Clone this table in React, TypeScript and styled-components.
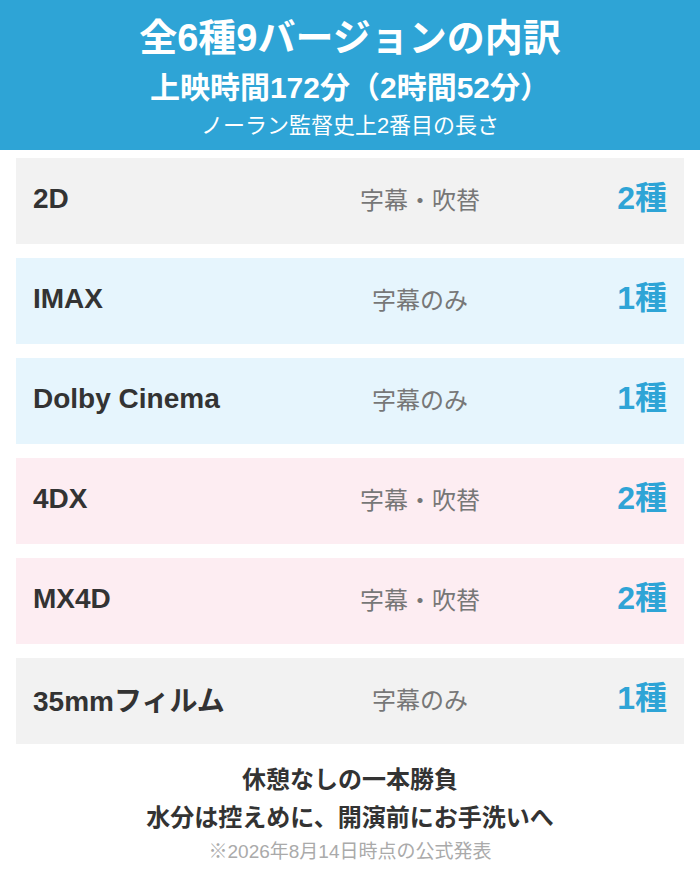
import React from "react";
import styled, { createGlobalStyle } from "styled-components";

const Global = createGlobalStyle`
  html, body { margin: 0; padding: 0; background: #ffffff; }
  body { font-family: "Liberation Sans", Arial, "Noto Sans CJK JP", sans-serif; }
`;

const Page = styled.div`
  width: 700px;
  display: flex;
  flex-direction: column;
`;

const Header = styled.header`
  background: #2ea4d6;
  color: #ffffff;
  height: 150px;
  box-sizing: border-box;
  padding-top: 13px;
  display: flex;
  flex-direction: column;
  align-items: center;
`;

const Title = styled.h1`
  margin: 0;
  font-size: 38px;
  font-weight: 700;
  line-height: 50px;
`;

const Sub = styled.div`
  font-size: 30px;
  font-weight: 700;
  line-height: 36px;
  margin-top: 7px;
`;

const Note = styled.div`
  font-size: 22px;
  font-weight: 400;
  line-height: 28px;
  margin-top: 6px;
`;

const List = styled.div`
  display: flex;
  flex-direction: column;
  gap: 14px;
  padding: 8px 16px 0;
`;

type Tone = "gray" | "blue" | "pink";
const tones: Record<Tone, string> = {
  gray: "#f2f2f2",
  blue: "#e6f5fd",
  pink: "#fdedf2",
};

const Row = styled.div<{ $tone: Tone }>`
  height: 86px;
  background: ${(p) => tones[p.$tone]};
  display: grid;
  grid-template-columns: 287px 200px 1fr;
  align-items: center;
  padding: 0 17px;
  box-sizing: border-box;
`;

const Label = styled.div`
  font-size: 28px;
  font-weight: 700;
  color: #333333;
  margin-bottom: 4px;
`;

const Lang = styled.div`
  font-size: 24px;
  font-weight: 400;
  color: #777777;
  text-align: center;
  margin-bottom: 6px;
`;

const Count = styled.div`
  font-size: 32px;
  font-weight: 700;
  color: #2ea4d6;
  text-align: right;
  margin-bottom: 12px;
`;

const Footer = styled.footer`
  display: flex;
  flex-direction: column;
  align-items: center;
  padding-top: 17px;
  color: #333333;
`;

const Strong = styled.div`
  font-size: 24px;
  font-weight: 700;
  line-height: 38px;
`;

const Small = styled.div`
  font-size: 19px;
  font-weight: 400;
  color: #aaaaaa;
  line-height: 28px;
  margin-top: 1px;
`;

const rows: { label: string; lang: string; count: string; tone: Tone }[] = [
  { label: "2D", lang: "字幕・吹替", count: "2種", tone: "gray" },
  { label: "IMAX", lang: "字幕のみ", count: "1種", tone: "blue" },
  { label: "Dolby Cinema", lang: "字幕のみ", count: "1種", tone: "blue" },
  { label: "4DX", lang: "字幕・吹替", count: "2種", tone: "pink" },
  { label: "MX4D", lang: "字幕・吹替", count: "2種", tone: "pink" },
  { label: "35mmフィルム", lang: "字幕のみ", count: "1種", tone: "gray" },
];

export default function App() {
  return (
    <Page>
      <Global />
      <Header>
        <Title>全6種9バージョンの内訳</Title>
        <Sub>上映時間172分（2時間52分）</Sub>
        <Note>ノーラン監督史上2番目の長さ</Note>
      </Header>
      <List>
        {rows.map((r) => (
          <Row key={r.label} $tone={r.tone}>
            <Label>{r.label}</Label>
            <Lang>{r.lang}</Lang>
            <Count>{r.count}</Count>
          </Row>
        ))}
      </List>
      <Footer>
        <Strong>休憩なしの一本勝負</Strong>
        <Strong>水分は控えめに、開演前にお手洗いへ</Strong>
        <Small>※2026年8月14日時点の公式発表</Small>
      </Footer>
    </Page>
  );
}
